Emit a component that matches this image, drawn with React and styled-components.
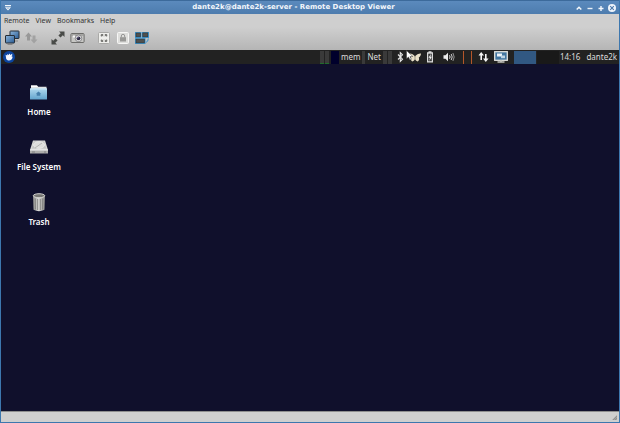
import React from "react";
import styled, { createGlobalStyle } from "styled-components";

const menus = ["Remote", "View", "Bookmarks", "Help"];

function App() {
  return (
    <>
      <GlobalStyle />
      <StWindow>
        <StTitlebar>
          <StTitleButton aria-label="Window menu">
            <WindowMenuIcon />
          </StTitleButton>
          <StTitle>dante2k@dante2k-server - Remote Desktop Viewer</StTitle>
          <StTitleControls>
            <StTitleButton aria-label="Shade">
              <ShadeIcon />
            </StTitleButton>
            <StTitleButton aria-label="Minimize">
              <MinimizeIcon />
            </StTitleButton>
            <StTitleButton aria-label="Maximize">
              <MaximizeIcon />
            </StTitleButton>
            <StTitleButton aria-label="Close">
              <CloseIcon />
            </StTitleButton>
          </StTitleControls>
        </StTitlebar>

        <StMenubar>
          {menus.map((menu) => (
            <StMenuButton key={menu}>{menu}</StMenuButton>
          ))}
        </StMenubar>

        <StToolbar>
          <StToolGroup>
            <StToolButton aria-label="Connect">
              <ConnectIcon />
            </StToolButton>
            <StToolButton aria-label="Disconnect" disabled>
              <DisconnectIcon />
            </StToolButton>
          </StToolGroup>
          <StToolGroup>
            <StToolButton aria-label="Fullscreen">
              <FullscreenIcon />
            </StToolButton>
            <StToolButton aria-label="Take screenshot">
              <CameraIcon />
            </StToolButton>
          </StToolGroup>
          <StToolGroup>
            <StToolButton aria-label="Scaling">
              <ScalingIcon />
            </StToolButton>
            <StToolButton aria-label="Read only">
              <LockIcon />
            </StToolButton>
            <StToolButton aria-label="Send keys">
              <KeysIcon />
            </StToolButton>
          </StToolGroup>
        </StToolbar>

        <StRemote>
          <StPanel>
            <StPanelButton aria-label="Applications">
              <XfceIcon />
            </StPanelButton>
            <StTray>
              <StMonitor>
                <StMeterPair>
                  <StMeter $width={4} $level />
                  <StMeter $width={4} $level />
                </StMeterPair>
                <StMeter $width={8} $color="#00002c" />
                <StPanelText>mem</StPanelText>
                <StMeter $width={3} />
                <StPanelText>Net</StPanelText>
                <StMeterPair>
                  <StMeter $width={4} />
                  <StMeter $width={4} />
                </StMeterPair>
              </StMonitor>
              <StIndicators>
                <BluetoothIcon />
                <StPointed>
                  <ButterflyIcon />
                  <StPointer>
                    <PointerIcon />
                  </StPointer>
                </StPointed>
                <BatteryIcon />
              </StIndicators>
              <SpeakerIcon />
              <StDividers />
              <StNetwork>
                <NetworkIcon />
                <DisplayIcon />
              </StNetwork>
              <StPager>
                <StWorkspace aria-label="Workspace 1" $active />
                <StWorkspace aria-label="Workspace 2" />
              </StPager>
              <StClock>
                <StPanelText>14:16</StPanelText>
                <StPanelText>dante2k</StPanelText>
              </StClock>
            </StTray>
          </StPanel>
          <StDesktop>
            <StShortcut>
              <HomeIcon />
              <span>Home</span>
            </StShortcut>
            <StShortcut>
              <DriveIcon />
              <span>File System</span>
            </StShortcut>
            <StShortcut>
              <TrashIcon />
              <span>Trash</span>
            </StShortcut>
          </StDesktop>
        </StRemote>

        <StStatusbar>
          <GripIcon />
        </StStatusbar>
      </StWindow>
    </>
  );
}

export default App;

// icons
// ---------------------------------------------
function WindowMenuIcon() {
  return (
    <svg width="8" height="8" viewBox="0 0 8 8">
      <path d="M1 1h6v1.300H1zM1 3.300h6L4 6.500z" fill="#f4f8fc" />
      <path d="M3.300 4.300h1.400" stroke="#5080b4" strokeWidth="0.700" />
    </svg>
  );
}

function ShadeIcon() {
  return (
    <svg width="8" height="8" viewBox="0 0 8 8">
      <path d="M1.700 5.500L4 3.300l2.300 2.200" fill="none" stroke="#f4f8fc" strokeWidth="1.500" />
    </svg>
  );
}

function MinimizeIcon() {
  return (
    <svg width="8" height="8" viewBox="0 0 8 8">
      <path d="M1.500 4.500h5" stroke="#e9f0f7" strokeWidth="1.400" />
    </svg>
  );
}

function MaximizeIcon() {
  return (
    <svg width="8" height="8" viewBox="0 0 8 8">
      <path d="M1.500 4.500h5M4 2v5" stroke="#f4f8fc" strokeWidth="1.400" />
    </svg>
  );
}

function CloseIcon() {
  return (
    <svg width="8" height="8" viewBox="0 0 8 8">
      <circle cx="4" cy="4" r="4" fill="#eef4fa" />
      <path d="M2.200 2.200l3.600 3.600M5.800 2.200L2.200 5.800" stroke="#4a78ab" strokeWidth="1.100" />
    </svg>
  );
}

function ConnectIcon() {
  return (
    <svg width="16" height="16" viewBox="0 0 16 16">
      <defs>
        <linearGradient id="screen" x1="0" y1="0" x2="1" y2="1">
          <stop offset="0" stopColor="#8db6dc" />
          <stop offset="1" stopColor="#285a92" />
        </linearGradient>
      </defs>
      <path d="M10 11h4" stroke="#8a8a8a" />
      <rect x="6" y="1" width="9" height="7.500" rx="0.500" fill="url(#screen)" stroke="#252d36" />
      <rect x="1.500" y="5.500" width="9" height="7.500" rx="0.500" fill="url(#screen)" stroke="#252d36" />
      <path d="M3.500 14.500h5" stroke="#8a8a8a" />
    </svg>
  );
}

function DisconnectIcon() {
  return (
    <svg width="14" height="14" viewBox="0 0 14 14">
      <path d="M4.500 1.500L8 5.500H6v4H3v-4H1z" fill="#989898" />
      <path d="M10 12.500l3.500-4h-2v-4h-3v4h-2z" fill="#a2a2a2" />
    </svg>
  );
}

function FullscreenIcon() {
  return (
    <svg width="14" height="14" viewBox="0 0 14 14">
      <path d="M8 .5h5.500V6l-1.700-1.700-2.300 2.300-2.100-2.100 2.300-2.300zM6 13.500H.5V8l1.700 1.700 2.300-2.300 2.100 2.100-2.300 2.300z" fill="#494b48" />
    </svg>
  );
}

function CameraIcon() {
  return (
    <svg width="15" height="14" viewBox="0 0 15 14">
      <rect x="0.900" y="2.500" width="13.200" height="9" rx="1" fill="#c7c7c4" stroke="#6c6c6a" />
      <path d="M1.500 4h12" stroke="#858583" />
      <rect x="3" y="4.500" width="2" height="2" fill="#f5f5f5" />
      <circle cx="8.500" cy="7.300" r="3.300" fill="#e8e8e8" stroke="#77777b" strokeWidth="0.800" />
      <circle cx="8.500" cy="7.300" r="1.900" fill="#29263e" />
      <circle cx="7.900" cy="6.700" r="0.600" fill="#a59cc8" />
    </svg>
  );
}

function ScalingIcon() {
  return (
    <svg width="12" height="12" viewBox="0 0 12 12">
      <rect x="0.500" y="0.500" width="11" height="11" rx="1" fill="#efefec" stroke="#a9a9a7" />
      <path d="M2.500 2h2.700v2.700l-.9-.9-.9.900-1-1 .900-.9zM9.500 2H6.800v2.700l.9-.9.9.9 1-1-.9-.9zM2.500 10h2.700V7.300l-.9.9-.9-.9-1 1 .9.9zM9.500 10H6.800V7.300l.9.900.9-.9 1 1-.9.900z" fill="#777774" />
    </svg>
  );
}

function LockIcon() {
  return (
    <svg width="12" height="12" viewBox="0 0 12 12">
      <rect x="0.500" y="0.500" width="11" height="11" rx="1" fill="#dededc" stroke="#f6f6f5" />
      <path d="M4.300 5.500V4a1.700 1.700 0 0 1 3.400 0v1.500" fill="none" stroke="#969695" />
      <rect x="3" y="5.200" width="6" height="4.300" fill="#989896" />
    </svg>
  );
}

function KeysIcon() {
  return (
    <svg width="16" height="14" viewBox="0 0 16 14">
      <path d="M1 1h6.300v6H1zM7.800 1H15v6H7.800zM1 7.200h10.500V13H1z" fill="#3e96d0" />
      <path d="M14.300 7.500q0 3.300-2.500 4" fill="none" stroke="#3e96d0" />
      <g fill="#50504e" stroke="#2d3236" strokeWidth="0.600">
        <rect x="2" y="2" width="4.500" height="3.800" />
        <rect x="8.800" y="1.900" width="5" height="3.900" />
        <rect x="2" y="8.100" width="8.300" height="3.800" />
      </g>
    </svg>
  );
}

function XfceIcon() {
  return (
    <svg width="12" height="12" viewBox="0 0 12 12">
      <circle cx="6" cy="6" r="6" fill="#0c459f" />
      <path d="M2.600 3.800l1.600.8.1-1.600 1.300 1 .9-1.500.9 1.400 1.700-1.200.2 1.600-.9.900 1.200.500C9.600 8 8 9.500 5.800 9.500 4 9.500 2.900 8.300 3 6.600z" fill="#f4f8ff" />
    </svg>
  );
}

function BluetoothIcon() {
  return (
    <svg width="7" height="12" viewBox="0 0 7 12">
      <path d="M1 3.500l4.500 4.700-2.200 2.300V1.500l2.200 2.300L1 8.500" fill="none" stroke="#e6e6e6" strokeWidth="1.100" />
    </svg>
  );
}

function ButterflyIcon() {
  return (
    <svg width="12" height="12" viewBox="0 0 12 12">
      <path d="M6 5.500C4.500 3.500 2.500 2.300.5 2.500c.2 2.300.8 3.600 1.700 4.100C1.500 8.500 2 10 3.300 10.500 4.800 10 5.600 9 6 8c.4 1 1.200 2 2.700 2.500 1.300-.5 1.800-2 1.100-3.900C10.900 6 11.800 4.500 12 2.500c-2.200-.2-4.500 1-6 3z" fill="#e9e0c8" />
      <path d="M6 4.500v4" stroke="#7e7868" strokeWidth="0.700" />
    </svg>
  );
}

function PointerIcon() {
  return (
    <svg width="8" height="11" viewBox="0 0 8 11">
      <path d="M.5.5v8.300l2-1.800 1.400 3 1.500-.7L4 6.500h2.800z" fill="#fff" stroke="#333" strokeWidth="0.500" />
    </svg>
  );
}

function BatteryIcon() {
  return (
    <svg width="8" height="12" viewBox="0 0 8 12">
      <path d="M2.500.3h3v1H7v10.200H1V1.300h1.500z" fill="#dadada" />
      <path d="M2.200 2.700h3.600v7.500H2.200z" fill="#3b3b3b" />
      <path d="M5 2.700L2.500 6.700h1.400L3.300 10l2.500-4.300H4.400z" fill="#f5f5f5" />
    </svg>
  );
}

function SpeakerIcon() {
  return (
    <svg width="12" height="12" viewBox="0 0 12 12">
      <path d="M.5 4.200h2L5 1.800v8.400L2.500 7.800h-2z" fill="#ededed" />
      <path d="M6.500 4.300q1.200 1.700 0 3.400" fill="none" stroke="#e6e6e6" />
      <path d="M8.200 3q2 3 0 6" fill="none" stroke="#cfcfcf" />
      <path d="M9.900 2q2.600 4 0 8" fill="none" stroke="#959595" />
    </svg>
  );
}

function NetworkIcon() {
  return (
    <svg width="11" height="12" viewBox="0 0 11 12">
      <path d="M3.200 1L6 4.500H4V9H2.400V4.500H.5zM7.800 11l2.800-3.500h-2V3H7v4.500H5z" fill="#f8f8f8" />
    </svg>
  );
}

function DisplayIcon() {
  return (
    <svg width="14" height="12" viewBox="0 0 14 12">
      <rect x="0.700" y="0.700" width="12.600" height="8.600" fill="#41759f" stroke="#e2e2dd" strokeWidth="1.300" />
      <rect x="3" y="2.500" width="5" height="3" fill="#eef5fa" />
      <rect x="7" y="4.500" width="4" height="2.700" fill="#bcd3e3" />
      <path d="M3.500 11h7M7 9v2" stroke="#c5c5c0" strokeWidth="1.500" />
    </svg>
  );
}

function HomeIcon() {
  return (
    <svg width="20" height="20" viewBox="0 0 20 20">
      <defs>
        <linearGradient id="folder" x1="0" y1="0" x2="0" y2="1">
          <stop offset="0" stopColor="#b0d8ee" />
          <stop offset="1" stopColor="#62a4cd" />
        </linearGradient>
      </defs>
      <path d="M2 3.500h6l1 1.200h8.500V8H2z" fill="#dfe3e4" />
      <path d="M2 3.500h6l1 1.500H2z" fill="#fff" />
      <rect x="1" y="6.500" width="17" height="11" rx="0.500" fill="url(#folder)" />
      <path d="M1 7h17" stroke="#cdeafa" />
      <path d="M9.500 9.500l2.600 2.300h-.8v2H7.700v-2h-.8z" fill="#457fab" />
    </svg>
  );
}

function DriveIcon() {
  return (
    <svg width="20" height="20" viewBox="0 0 20 20">
      <path d="M4 3.500h12l3 9.500H1z" fill="#d8d8d6" />
      <path d="M5 4.500h10l2 7H3z" fill="#c4c4c2" />
      <ellipse cx="10" cy="8" rx="5.500" ry="3.300" fill="#dededc" stroke="#f1f1f0" strokeWidth="0.700" />
      <path d="M6 11l7-5" stroke="#a4a4a2" strokeWidth="0.700" />
      <path d="M1 13h18v3.500H1z" fill="#aeaeac" />
      <path d="M1 13h18" stroke="#f1f1f1" />
      <path d="M3 15h3M15 15h2" stroke="#777" strokeWidth="0.800" />
    </svg>
  );
}

function TrashIcon() {
  return (
    <svg width="20" height="20" viewBox="0 0 20 20">
      <defs>
        <linearGradient id="can" x1="0" y1="0" x2="1" y2="0">
          <stop offset="0" stopColor="#8a8a88" />
          <stop offset="0.450" stopColor="#dcdcda" />
          <stop offset="1" stopColor="#858583" />
        </linearGradient>
      </defs>
      <path d="M4 3.500h12l-.5 14.300q-5.500 2.700-11 0z" fill="url(#can)" />
      <path d="M6.300 6.500l.2 11M8.700 7v11M11.300 7v11M13.700 6.500l-.2 11" stroke="#80807e" strokeWidth="0.900" />
      <ellipse cx="10" cy="3.700" rx="5.700" ry="2" fill="#767673" stroke="#d2d2cf" />
    </svg>
  );
}

function GripIcon() {
  return (
    <svg width="6" height="6" viewBox="0 0 6 6">
      <path d="M6 1v5H1z" fill="#a5a5a5" />
      <path d="M2 6l4-4M4 6l2-2" stroke="#858585" strokeWidth="0.600" />
    </svg>
  );
}
// ---------------------------------------------

const GlobalStyle = createGlobalStyle`
  * {
    box-sizing: border-box;
  }
  body {
    margin: 0;
    font-family: "Noto Sans", "Open Sans", sans-serif;
    font-size: 8px;
  }
  button {
    background: none;
    border: none;
    color: inherit;
    font: inherit;
    padding: 0;
  }
  svg {
    display: block;
    flex: none;
  }
`;

const StWindow = styled.div`
  background-color: #cfcfcf;
  border: 1px solid #3d77ae;
  border-top: none;
  display: flex;
  flex-direction: column;
  height: 100vh;
`;

const StTitlebar = styled.header`
  align-items: center;
  background: linear-gradient(#5b8abd, #4d7cae);
  border-top: 1px solid #3c6a9b;
  color: #f2f6fb;
  display: flex;
  height: 14px;
  padding: 0 3px;
`;

const StTitle = styled.h1`
  flex: 1;
  font-family: "DejaVu Sans", sans-serif;
  font-size: 7px;
  font-weight: 700;
  line-height: 13px;
  margin: 0;
  text-align: center;
`;

const StTitleControls = styled.div`
  display: flex;
  gap: 3px;
`;

const StTitleButton = styled.button`
  height: 8px;
  width: 8px;
`;

const StMenubar = styled.nav`
  color: #333;
  display: flex;
  font-size: 7px;
  gap: 6px;
  padding: 0 3px;
`;

const StMenuButton = styled.button`
  line-height: 13px;
`;

const StToolbar = styled.div`
  background: linear-gradient(#cfcfcf, #b5b5b5);
  display: flex;
  gap: 11px;
  height: 23px;
  padding: 0 3px;
`;

const StToolGroup = styled.div`
  display: flex;
  gap: 3px;
`;

const StToolButton = styled.button`
  align-items: center;
  display: flex;
  height: 22px;
  justify-content: center;
  width: 16px;
`;

const StRemote = styled.main`
  background-color: #10102c;
  display: flex;
  flex: 1;
  flex-direction: column;
`;

const StPanel = styled.div`
  align-items: center;
  background-color: #222;
  color: #dcdcdc;
  display: flex;
  height: 14px;
  justify-content: space-between;
  padding: 0 2px;
`;

const StPanelButton = styled.button`
  height: 12px;
`;

const StPanelText = styled.span`
  line-height: 14px;
`;

const StTray = styled.div`
  align-items: center;
  display: flex;
`;

const StMonitor = styled.div`
  align-items: center;
  display: flex;
  gap: 2px;
`;

const StMeterPair = styled.div`
  display: flex;
  gap: 1px;
`;

const StMeter = styled.div`
  background-color: ${(props) => props.$color || "#3a3a3a"};
  border-bottom: 1px solid ${(props) => (props.$level ? "#216b2b" : "transparent")};
  height: 13px;
  width: ${(props) => props.$width}px;
`;

const StIndicators = styled.div`
  align-items: center;
  display: flex;
  gap: 5px;
  margin: 0 9px 0 5px;
`;

const StPointed = styled.div`
  position: relative;
`;

const StPointer = styled.div`
  left: -3px;
  position: absolute;
  top: -1px;
`;

const StDividers = styled.div`
  border-left: 1px solid #b5562a;
  border-right: 1px solid #b5562a;
  height: 13px;
  margin-left: 8px;
  width: 9px;
`;

const StNetwork = styled.div`
  align-items: center;
  display: flex;
  gap: 5px;
  margin: 0 6px;
`;

const StPager = styled.div`
  display: flex;
  gap: 1px;
`;

const StWorkspace = styled.button`
  background-color: ${(props) => (props.$active ? "#315882" : "#191919")};
  height: 13px;
  width: 22px;
`;

const StClock = styled.div`
  display: flex;
  gap: 6px;
  margin-left: 1px;
`;

const StDesktop = styled.div`
  align-items: flex-start;
  display: flex;
  flex-direction: column;
  gap: 20px;
  padding-top: 18px;
`;

const StShortcut = styled.button`
  align-items: center;
  color: #fff;
  display: flex;
  flex-direction: column;
  font-weight: 600;
  gap: 4px;
  line-height: 11px;
  width: 76px;
`;

const StStatusbar = styled.footer`
  align-items: flex-end;
  background-color: #cfcfcf;
  border-top: 1px solid #8e8e8e;
  display: flex;
  height: 11px;
  justify-content: flex-end;
  padding: 2px;
`;
